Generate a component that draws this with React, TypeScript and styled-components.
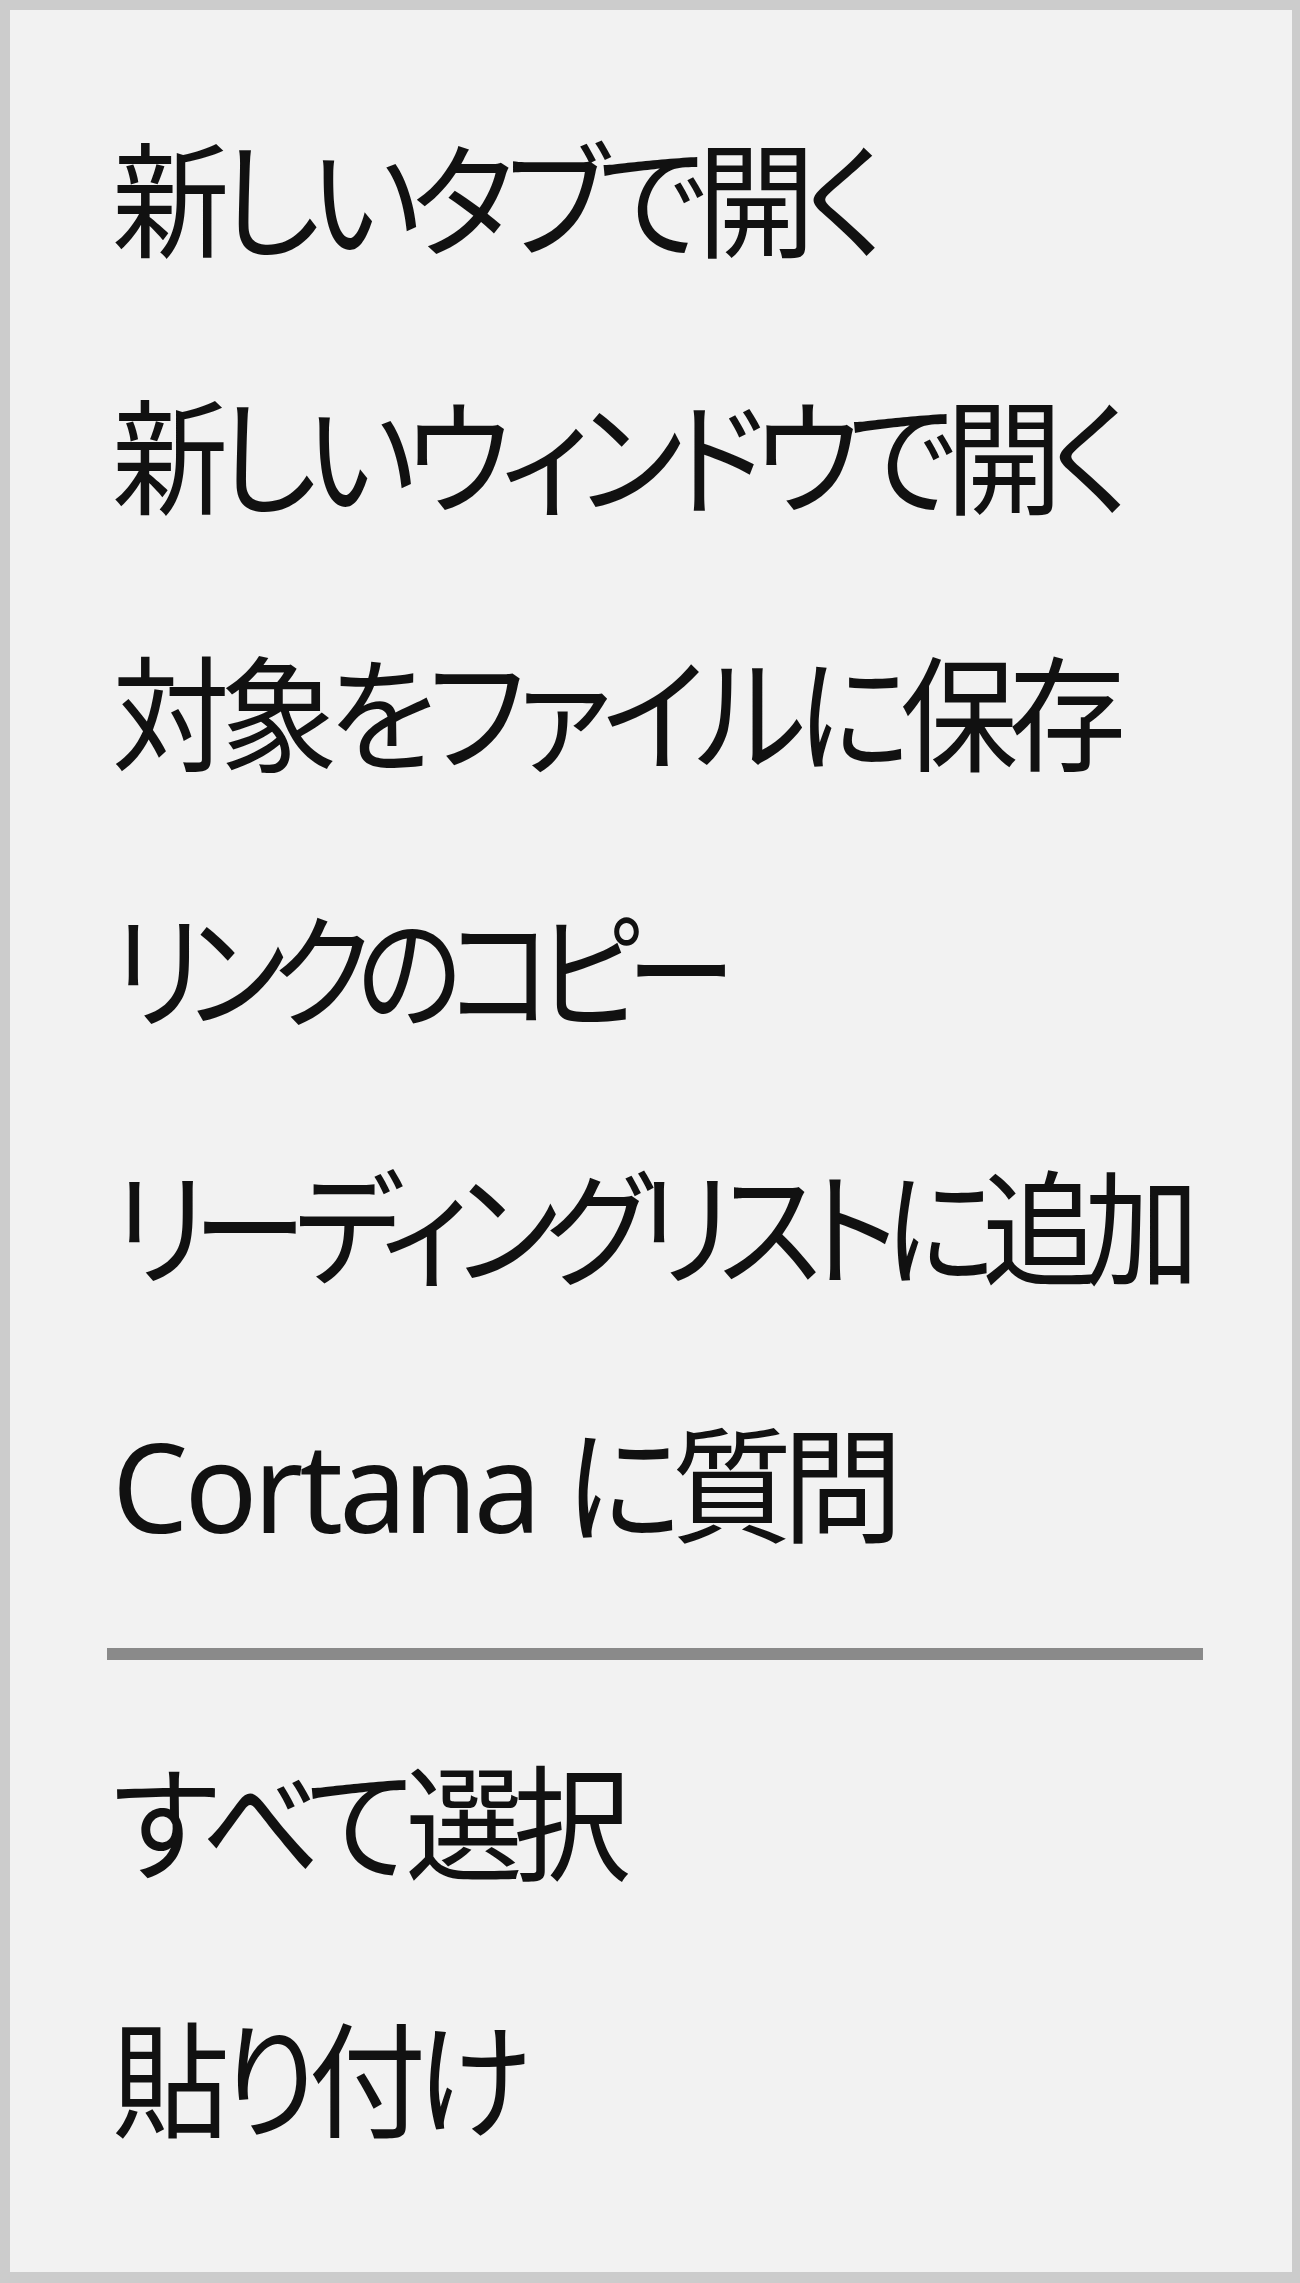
import React from "react";
import styled, { createGlobalStyle } from "styled-components";

const GlobalStyle = createGlobalStyle`
  html, body {
    margin: 0;
    padding: 0;
    background: #cccccc;
  }
  * { box-sizing: border-box; }
`;

const Menu = styled.div`
  width: 1300px;
  height: 2283px;
  background: #f2f2f2;
  border-style: solid;
  border-color: #cccccc;
  border-width: 10px 8px 11px 10px;
  padding: 61px 0 0 0;
  display: flex;
  flex-direction: column;
  overflow: hidden;
  font-family: "Noto Sans", "Noto Sans CJK JP", sans-serif;
  font-feature-settings: "palt";
  color: #111111;
`;

const Item = styled.div`
  height: 257px;
  display: flex;
  align-items: center;
  padding-left: 102px;
  font-size: 125px;
  line-height: 1;
  white-space: nowrap;
`;

const Label = styled.span<{ $spacing: number; $scale: number }>`
  display: inline-block;
  letter-spacing: ${(p) => p.$spacing}px;
  transform: scaleX(${(p) => p.$scale});
  transform-origin: left center;
`;

const Latin = styled.span`
  letter-spacing: -4px;
`;

const Separator = styled.div`
  height: 81px;
  display: flex;
  align-items: center;
  padding: 0 89px 0 97px;
  &::after {
    content: "";
    flex: 1;
    height: 12px;
    background: #8a8a8a;
  }
`;

type Entry = { latin?: string; text: string; spacing?: number; scale?: number };

const topItems: Entry[] = [
  { text: "新しいタブで開く" },
  { text: "新しいウィンドウで開く", spacing: -11, scale: 0.93 },
  { text: "対象をファイルに保存" },
  { text: "リンクのコピー", spacing: -16, scale: 0.88 },
  { text: "リーディングリストに追加", spacing: -14, scale: 0.92 },
  { latin: "Cortana ", text: "に質問", scale: 0.965 },
];

const bottomItems: Entry[] = [{ text: "すべて選択" }, { text: "貼り付け" }];

function MenuItem({ entry }: { entry: Entry }) {
  return (
    <Item role="menuitem">
      <Label $spacing={entry.spacing ?? -10} $scale={entry.scale ?? 0.94}>
        {entry.latin && <Latin>{entry.latin}</Latin>}
        {entry.text}
      </Label>
    </Item>
  );
}

export default function App() {
  return (
    <>
      <GlobalStyle />
      <Menu role="menu">
        {topItems.map((e) => (
          <MenuItem key={e.text + (e.latin ?? "")} entry={e} />
        ))}
        <Separator role="separator" />
        {bottomItems.map((e) => (
          <MenuItem key={e.text} entry={e} />
        ))}
      </Menu>
    </>
  );
}
